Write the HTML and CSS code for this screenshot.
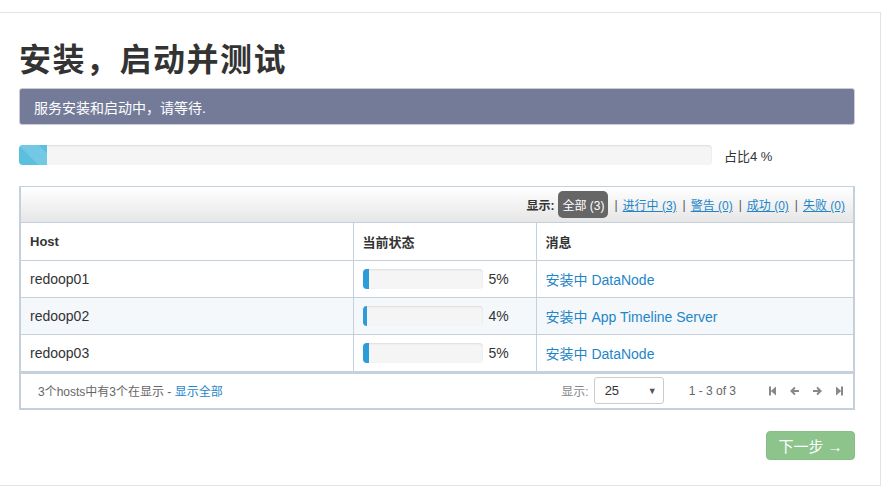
FILE: index.html
```html
<!DOCTYPE html>
<html lang="zh">
<head>
<meta charset="utf-8">
<title>安装，启动并测试</title>
<link rel="stylesheet" href="styles.css">
</head>
<body>
<div class="panel">
  <h2 class="title">安装，启动并测试</h2>
  <div class="alert">服务安装和启动中，请等待.</div>
  <div class="overall">
    <div class="progress big"><div class="bar striped" style="width:4%"></div></div>
    <span class="overall-label">占比4 %</span>
  </div>
  <div class="box">
    <div class="filter-bar">
      <span class="filter-label">显示:</span>
      <span class="pill">全部 (3)</span>
      <span class="sep">|</span>
      <a class="flink" href="#">进行中 (3)</a>
      <span class="sep">|</span>
      <a class="flink" href="#">警告 (0)</a>
      <span class="sep">|</span>
      <a class="flink" href="#">成功 (0)</a>
      <span class="sep">|</span>
      <a class="flink" href="#">失败 (0)</a>
    </div>
    <table class="hosts">
      <thead>
        <tr><th class="c-host">Host</th><th class="c-status">当前状态</th><th class="c-msg">消息</th></tr>
      </thead>
      <tbody>
        <tr>
          <td>redoop01</td>
          <td><div class="cell-prog"><div class="progress small"><div class="bar solid" style="width:5%"></div></div><span class="pct">5%</span></div></td>
          <td><a class="msg" href="#">安装中 DataNode</a></td>
        </tr>
        <tr class="alt">
          <td>redoop02</td>
          <td><div class="cell-prog"><div class="progress small"><div class="bar solid" style="width:4%"></div></div><span class="pct">4%</span></div></td>
          <td><a class="msg" href="#">安装中 App Timeline Server</a></td>
        </tr>
        <tr>
          <td>redoop03</td>
          <td><div class="cell-prog"><div class="progress small"><div class="bar solid" style="width:5%"></div></div><span class="pct">5%</span></div></td>
          <td><a class="msg" href="#">安装中 DataNode</a></td>
        </tr>
      </tbody>
    </table>
    <div class="footer">
      <span class="summary">3个hosts中有3个在显示 - <a href="#" class="showall">显示全部</a></span>
      <div class="pager">
        <span class="show-label">显示:</span>
        <div class="select"><span>25</span><span class="caret">▼</span></div>
        <span class="range">1 - 3 of 3</span>
        <div class="nav">
          <svg width="7" height="10" viewBox="0 0 7 10"><rect x="0" y="0.5" width="2" height="9" fill="#888"/><path d="M7 0.5 L1.8 5 L7 9.5 Z" fill="#888"/></svg>
          <svg width="9" height="10" viewBox="0 0 9 10"><path d="M4.3 0.8 L5.6 2.1 L4 3.9 H9 V6.1 H4 L5.6 7.9 L4.3 9.2 L0 5 Z" fill="#888"/></svg>
          <svg width="9" height="10" viewBox="0 0 9 10"><path d="M4.7 0.8 L3.4 2.1 L5 3.9 H0 V6.1 H5 L3.4 7.9 L4.7 9.2 L9 5 Z" fill="#888"/></svg>
          <svg width="7" height="10" viewBox="0 0 7 10"><rect x="5" y="0.5" width="2" height="9" fill="#888"/><path d="M0 0.5 L5.2 5 L0 9.5 Z" fill="#888"/></svg>
        </div>
      </div>
    </div>
  </div>
  <div class="actions">
    <button class="next" type="button">下一步 →</button>
  </div>
</div>
</body>
</html>
```

FILE: styles.css
```css
* { box-sizing: border-box; }
html, body { margin: 0; padding: 0; background: #fff; }
body {
  font-family: "Liberation Sans", Arial, "Noto Sans CJK SC", sans-serif;
  color: #333;
  font-size: 13px;
  padding-top: 12px;
}
.panel {
  width: 882px;
  margin-left: -1px;
  border: 1px solid #e3e3e3;
  padding: 26px 25px 25px 19px;
}
.title {
  margin: 0 0 13px;
  font-family: "Noto Sans CJK SC", sans-serif;
  font-size: 32px;
  line-height: 36px;
  letter-spacing: 1.5px;
  font-weight: 700;
  color: #333;
}
.alert {
  height: 37px;
  background: #747b99;
  border: 1px solid #c9ccd6;
  border-radius: 3px;
  color: #fff;
  padding: 0 14px;
  display: flex;
  align-items: center;
  font-size: 14px;
  font-family: "Liberation Sans", "Noto Sans CJK SC", sans-serif;
  margin-bottom: 20px;
}
.overall {
  display: flex;
  align-items: center;
  margin-bottom: 21px;
}
.progress {
  background: #f5f5f5;
  border-radius: 4px;
  box-shadow: inset 0 1px 2px rgba(0,0,0,0.1);
  overflow: hidden;
  display: flex;
}
.progress.big { width: 693px; height: 20px; }
.overall-label { margin-left: 12px; font-size: 13px; }
.bar { height: 100%; }
.bar.striped {
  background-color: #5bc0de;
  background-image: linear-gradient(45deg, rgba(255,255,255,.15) 25%, transparent 25%, transparent 50%, rgba(255,255,255,.15) 50%, rgba(255,255,255,.15) 75%, transparent 75%, transparent);
  background-size: 40px 40px;
}
.bar.solid { background: #2d9cdb; }

.box {
  border: 1px solid #c4d0dc;
  border-width: 1px 2px 2px 2px;
}
.filter-bar {
  height: 36px;
  background: linear-gradient(#ffffff, #e6e6e6);
  border-bottom: 1px solid #c4d0dc;
  display: flex;
  align-items: center;
  justify-content: flex-end;
  padding-right: 8px;
  font-size: 12px;
}
.filter-label { font-weight: 700; margin-right: 4px; }
.pill {
  background: #666;
  color: #fff;
  border-radius: 5px;
  padding: 0 4px;
  height: 27px;
  display: inline-flex;
  align-items: center;
}
.sep { color: #555; margin: 0 5px 0 6px; }
.flink { color: #1e86c8; text-decoration: underline; }

.hosts {
  width: 100%;
  border-collapse: collapse;
  table-layout: fixed;
}
.hosts th, .hosts td {
  border: 1px solid #c4d0dc;
  text-align: left;
  padding: 0 9px;
  height: 37px;
}
.hosts tr > :first-child { border-left: 0; }
.hosts tr > :last-child { border-right: 0; }
.hosts thead th { height: 37px; font-weight: 700; font-size: 13px; color: #333; border-top: 0; }
.hosts td { font-size: 14px; color: #333; }
.c-host { width: 332px; }
.c-status { width: 183px; }
.hosts tr.alt td { background: #f5f8fb; }
.cell-prog { display: flex; align-items: center; }
.progress.small { width: 120px; height: 20px; }
.pct { margin-left: 6px; font-size: 14px; }
.msg { color: #1e86c8; text-decoration: none; }

.footer {
  height: 36px;
  border-top: 2px solid #c4d0dc;
  display: flex;
  align-items: center;
  justify-content: space-between;
  padding: 0 10px 0 17px;
  font-size: 12px;
  color: #666;
}
.showall { color: #1e86c8; text-decoration: none; }
.pager { display: flex; align-items: center; }
.show-label { color: #888; margin-right: 5px; }
.select {
  width: 70px;
  height: 27px;
  border: 1px solid #ccc;
  border-radius: 3px;
  display: flex;
  align-items: center;
  justify-content: space-between;
  padding: 0 6px 0 10px;
  color: #333;
  font-size: 13px;
}
.caret { font-size: 9px; color: #555; }
.range { margin-left: 25px; color: #666; }
.nav { display: flex; align-items: center; gap: 14px; margin-left: 33px; }
.nav svg { display: block; }

.actions {
  display: flex;
  justify-content: flex-end;
  margin-top: 21px;
}
.next {
  width: 89px;
  height: 29px;
  background: #8cc48b;
  border: 1px solid #87bd86;
  border-radius: 4px;
  color: #fff;
  font-family: "Liberation Sans", "Noto Sans CJK SC", sans-serif;
  font-size: 15px;
  padding: 0;
}
```
